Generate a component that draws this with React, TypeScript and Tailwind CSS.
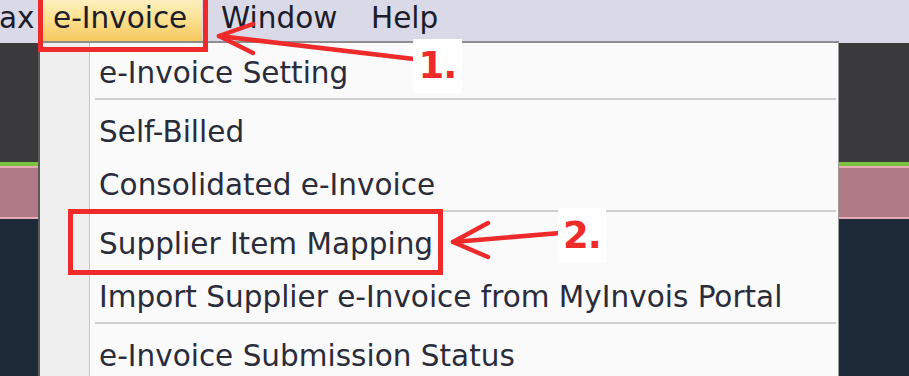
import React from 'react';

type Entry = { label: string } | { sep: true };

const entries: Entry[] = [
  { label: 'e-Invoice Setting' },
  { sep: true },
  { label: 'Self-Billed' },
  { label: 'Consolidated e-Invoice' },
  { sep: true },
  { label: 'Supplier Item Mapping' },
  { label: 'Import Supplier e-Invoice from MyInvois Portal' },
  { sep: true },
  { label: 'e-Invoice Submission Status' },
];

function Arrow({ tip, b1, b2, tail }: { tip: [number, number]; b1: [number, number]; b2: [number, number]; tail: [number, number] }) {
  return (
    <svg className="absolute left-0 top-0 pointer-events-none" width={909} height={376}>
      <g stroke="#ef2a2a" strokeWidth={4.5} strokeLinecap="round" fill="none">
        <line x1={tail[0]} y1={tail[1]} x2={tip[0]} y2={tip[1]} />
        <polyline points={`${b1[0]},${b1[1]} ${tip[0]},${tip[1]} ${b2[0]},${b2[1]}`} strokeLinejoin="round" />
      </g>
    </svg>
  );
}

export default function App() {
  return (
    <div className="relative w-[909px] h-[376px] overflow-hidden bg-[#1f2a38] font-['DejaVu_Sans',Verdana,sans-serif]">
      {/* Menu bar */}
      <div className="h-[43px] bg-[#d9d9e7] flex items-start text-[29.5px] leading-[34px] text-[#1c1c2a]">
        <span className="w-[43px] -ml-[1px] mt-[1px]">ax</span>
        <div className="w-[160px] h-[42px] pl-[11px] pt-[1px] bg-gradient-to-b from-[#fdf0be] via-[#fbdf8c] to-[#f6c65a]">
          e-Invoice
        </div>
        <span className="ml-[19px] w-[150px] mt-[1px]">Window</span>
        <span className="mt-[1px]">Help</span>
      </div>

      {/* Workspace behind the menu */}
      <div className="h-[119px] bg-[#3a3a3c]" />
      <div className="h-[4px] bg-[#7cc23e]" />
      <div className="h-[2px] bg-[#e7a9b4]" />
      <div className="h-[49px] bg-[#b07a86]" />
      <div className="h-[2px] bg-[#e7a9b4]" />

      {/* Dropdown */}
      <div className="absolute left-[38px] top-[41px] w-[801px] h-[345px] flex bg-[#fafafa] border-t-2 border-r border-l-2 border-t-[#8e8e8e] border-r-[#9a9a9a] border-l-[#5a5a5a]">
        <div className="w-[50px] bg-[#efefef] border-r border-[#c6c6c6] shadow-[1px_0_0_#ffffff]" />
        <div className="flex-1 flex flex-col pl-[1px] text-[29.5px] leading-[34px] text-[#2a2c3a]">
          {entries.map((e, i) =>
            'sep' in e ? (
              <div key={i} className="h-[6px] flex items-center pl-[4px] pr-[2px]">
                <div className="h-[2px] w-full bg-[#cfcfcf]" />
              </div>
            ) : (
              <div key={i} className="h-[53px] pl-[8px] pt-[13px] whitespace-nowrap">
                {e.label}
              </div>
            )
          )}
        </div>
      </div>

      {/* Annotations */}
      <div className="absolute left-[38px] -top-[6px] w-[170px] h-[58px] border-[5px] border-[#ef2a2a]" />
      <div className="absolute left-[68px] top-[209px] w-[375px] h-[66px] border-[5px] border-[#ef2a2a]" />

      <Arrow tip={[219, 36]} b1={[253, 24]} b2={[253, 53]} tail={[414, 59]} />
      <Arrow tip={[453, 242]} b1={[488, 223]} b2={[488, 257]} tail={[560, 233]} />

      <div className="absolute left-[413px] top-[39px] w-[49px] h-[54px] bg-white flex items-center justify-center text-[37px] font-bold text-[#ef2a2a] tracking-[-1px]">
        1.
      </div>
      <div className="absolute left-[558px] top-[208px] w-[48px] h-[55px] bg-white flex items-center justify-center text-[37px] font-bold text-[#ef2a2a] tracking-[-1px]">
        2.
      </div>
    </div>
  );
}
